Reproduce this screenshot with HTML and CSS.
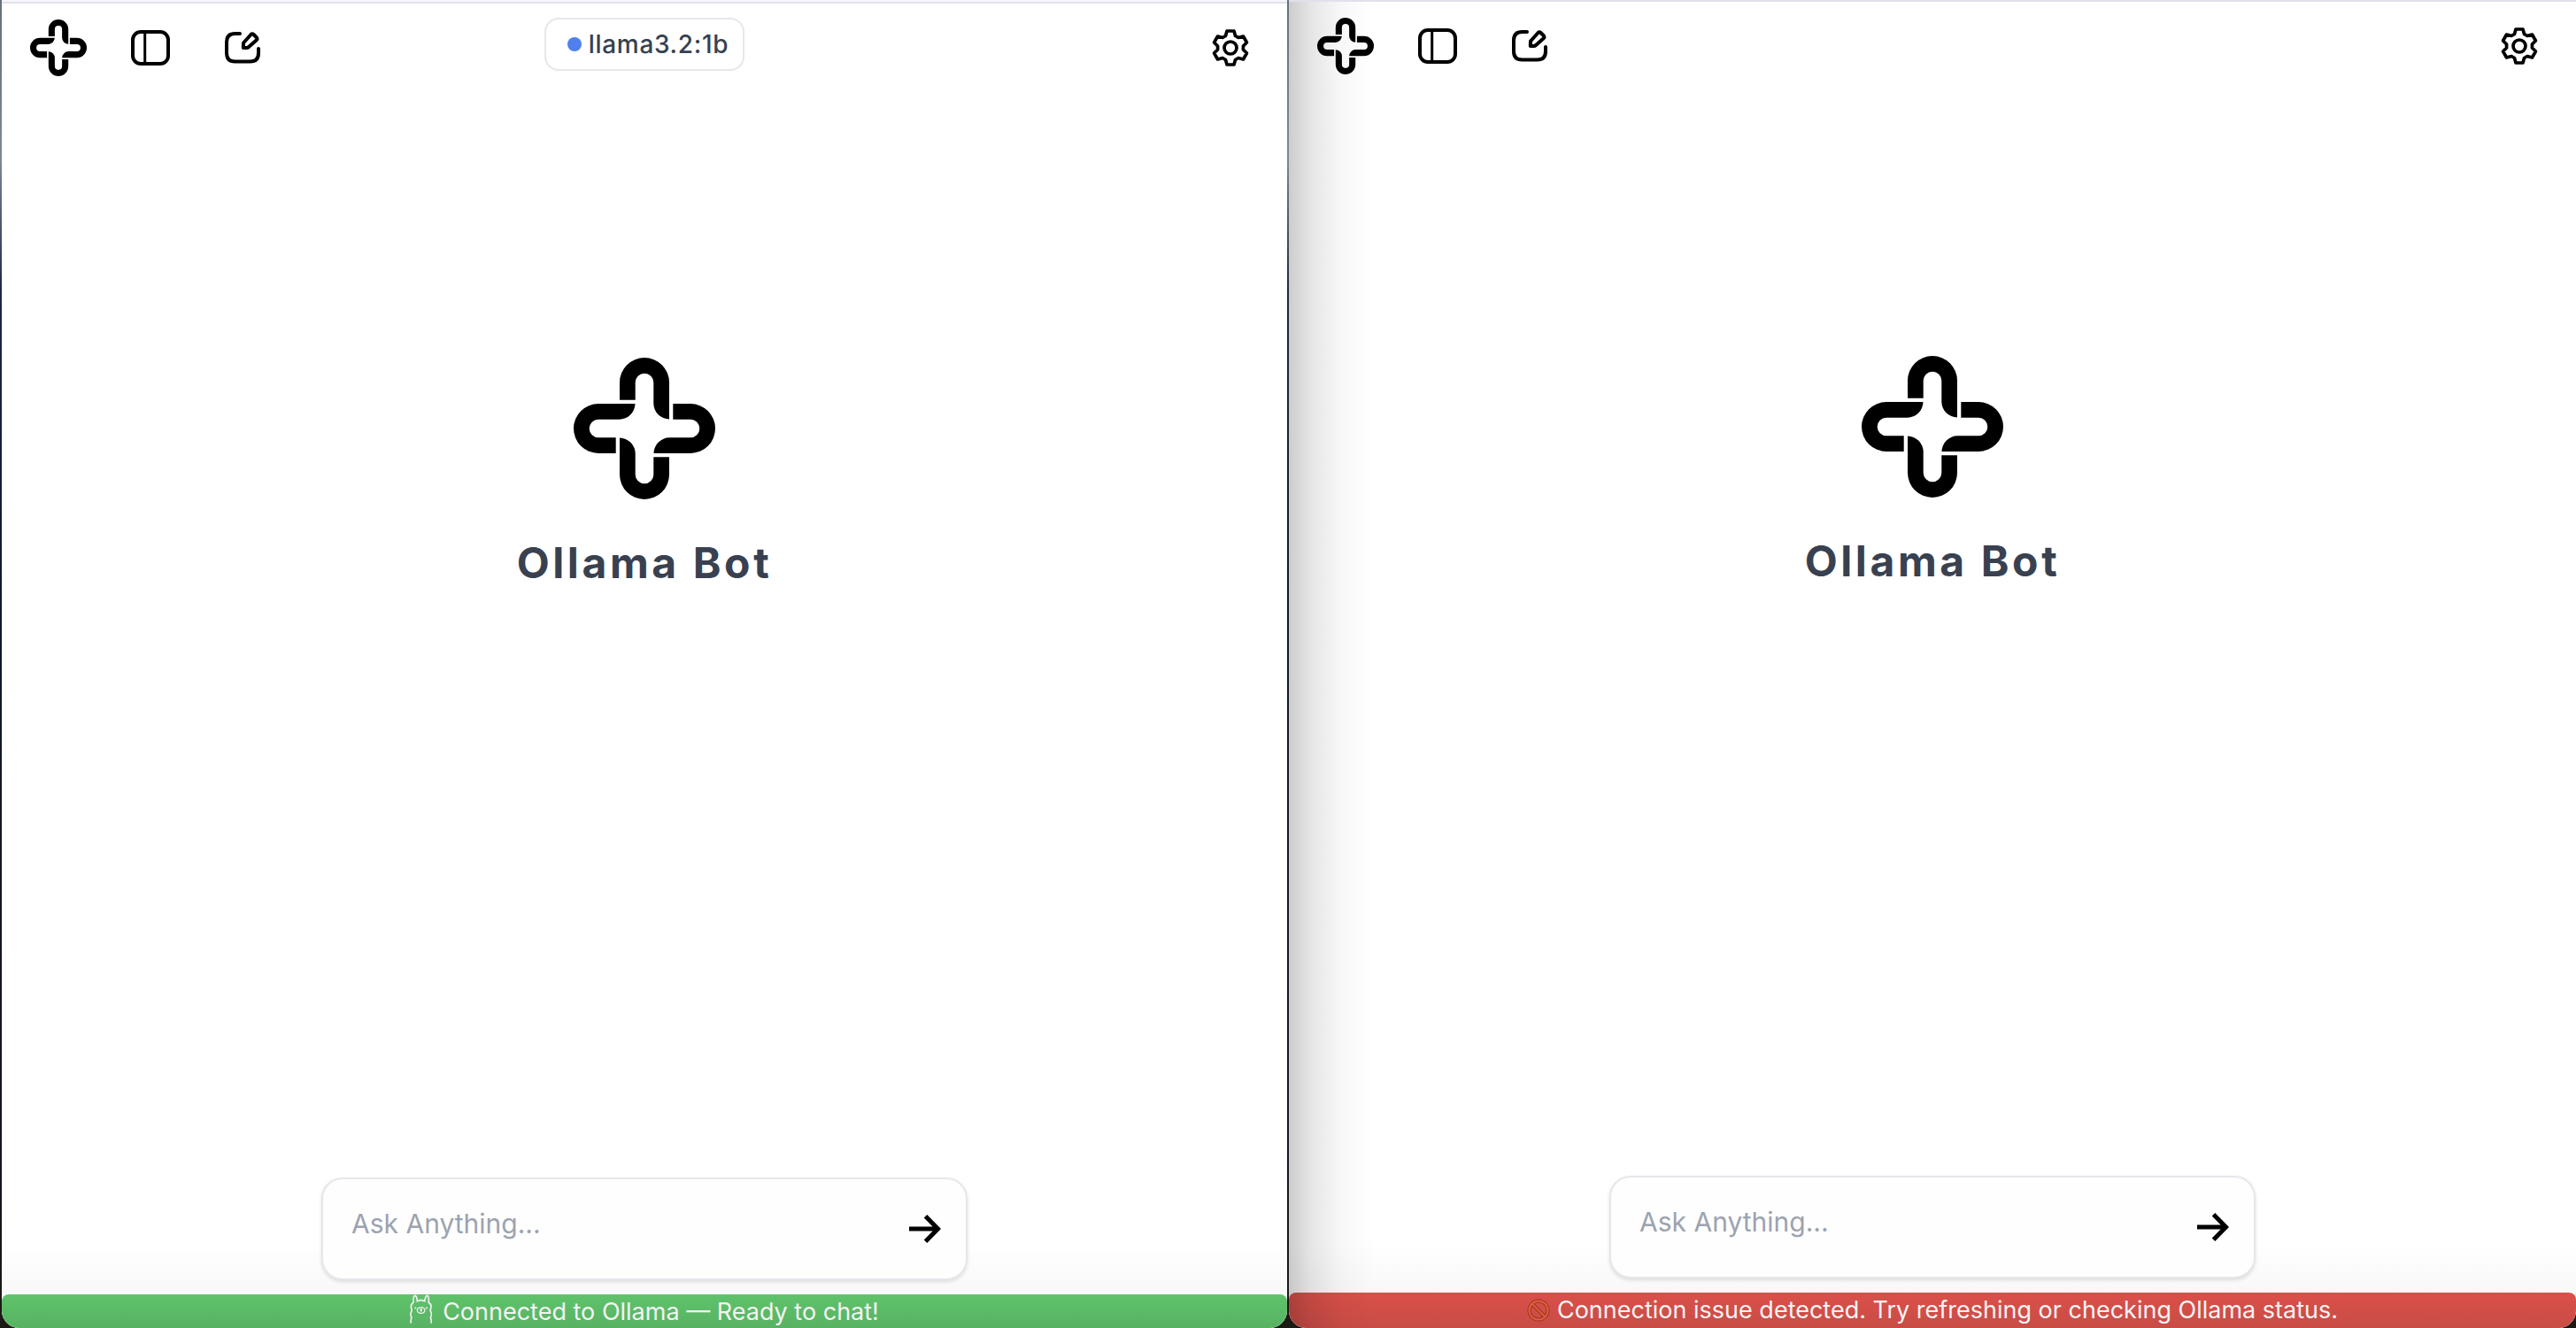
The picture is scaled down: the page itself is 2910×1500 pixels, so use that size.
FILE: index.html
```html
<!DOCTYPE html>
<html lang="en">
<head>
<meta charset="utf-8">
<meta name="viewport" content="width=device-width, initial-scale=1">
<title>Ollama Bot</title>
<link rel="stylesheet" href="styles.css">
</head>
<body>
<svg class="sprite" aria-hidden="true">
  <defs>
    <path id="arm" d="M52 47.7V28a28 28 0 0 1 56 0V69.5A18 18 0 0 1 90.3 51.7V28a10.3 10.3 0 0 0-20.6 0V47.7Z"/>
    <symbol id="logo" viewBox="0 0 160 160">
      <use href="#arm"/>
      <use href="#arm" transform="rotate(90 80 80)"/>
      <use href="#arm" transform="rotate(180 80 80)"/>
      <use href="#arm" transform="rotate(270 80 80)"/>
    </symbol>
    <symbol id="panel" viewBox="0 0 48 48">
      <rect x="4" y="6" width="40" height="36" rx="9" fill="none" stroke="#000" stroke-width="4"/>
      <path d="M17.7 6V42" stroke="#000" stroke-width="3"/>
    </symbol>
    <symbol id="compose" viewBox="0 0 48 48">
      <g fill="none" stroke="#000" stroke-width="4" stroke-linecap="round" stroke-linejoin="round">
        <path d="M21 8H15.500Q6 8 6 17.500V30Q6 39.500 15.500 39.500H32.500Q42 39.500 42 30V25"/>
        <path d="M25 18.500L33.500 9Q35 7.500 36.500 9L40 12.500Q41 14 39.800 15.200L31 23Q30 24 28.500 24H24.800Z"/>
      </g>
    </symbol>
    <symbol id="gear" viewBox="-24 -24 48 48">
      <g fill="none" stroke="#000" stroke-width="3.700" stroke-linejoin="round">
        <path d="M-4 -19H4L5.500 -13.500L8.900 -11.500L14.450 -13L18.450 -6L14.440 -2V2L18.450 6L14.450 13L8.900 11.500L5.500 13.500L4 19H-4L-5.500 13.500L-8.900 11.500L-14.450 13L-18.450 6L-14.440 2V-2L-18.450 -6L-14.450 -13L-8.900 -11.500L-5.500 -13.500Z"/>
        <circle r="7"/>
      </g>
    </symbol>
    <symbol id="arrow" viewBox="0 0 36 32">
      <path d="M0 16H32M18.500 1.800L32.500 16L18.500 30.200" fill="none" stroke="#000" stroke-width="5"/>
    </symbol>
    <symbol id="llama" viewBox="37 64 75 99">
      <g fill="none" stroke="#f1f1f1" stroke-width="5" stroke-linecap="round">
        <path d="M49 90Q48 69 54 68Q61 69 62 87Q75 81 87 87Q90 69 96 68Q102 69 101 90"/>
        <path d="M49 91Q38 99 42 112Q45 117 42 123Q37 133 43 143Q39 150 41 160M101 91Q112 99 108 112Q105 117 108 123Q113 133 107 143Q111 150 109 160"/>
        <ellipse cx="75" cy="118" rx="13" ry="10" stroke-width="4"/>
        <path d="M73 115L75 117L77 115M75 117V121M55 110H57M93 110H95"/>
      </g>
    </symbol>
    <symbol id="blocked" viewBox="0 0 26 26">
      <circle cx="13" cy="13" r="10.500" fill="none" stroke="#9c3220" stroke-width="4"/>
      <path d="M6 6L20 20" stroke="#9c3220" stroke-width="4"/>
      <circle cx="13" cy="13" r="10.500" fill="none" stroke="#e0603c" stroke-width="2"/>
      <path d="M6 6L20 20" stroke="#e0603c" stroke-width="2"/>
    </symbol>
  </defs>
</svg>

<div class="desktop">
  <section class="window window-online" aria-label="Connected">
    <div class="titlebar"></div>
    <div class="app">
      <header class="header">
        <nav class="tools">
          <svg class="logo-small" role="img" aria-label="Ollama Bot"><use href="#logo"/></svg>
          <button class="tool" type="button" aria-label="Toggle sidebar"><svg class="icon"><use href="#panel"/></svg></button>
          <button class="tool" type="button" aria-label="New chat"><svg class="icon"><use href="#compose"/></svg></button>
        </nav>
        <button class="model" type="button"><span class="dot"></span>llama3.2:1b</button>
        <button class="tool settings" type="button" aria-label="Settings"><svg class="icon"><use href="#gear"/></svg></button>
      </header>
      <main class="hero">
        <svg class="logo-large" aria-hidden="true"><use href="#logo"/></svg>
        <h1 class="title">Ollama Bot</h1>
      </main>
      <form class="composer">
        <input class="prompt" type="text" placeholder="Ask Anything..." aria-label="Ask Anything">
        <button class="send" type="button" aria-label="Send"><svg class="arrow"><use href="#arrow"/></svg></button>
      </form>
      <footer class="status status-ok"><svg class="llama" aria-hidden="true"><use href="#llama"/></svg><span>Connected to Ollama — Ready to chat!</span></footer>
    </div>
  </section>

  <section class="window window-offline" aria-label="Disconnected">
    <div class="titlebar"></div>
    <div class="app">
      <header class="header">
        <nav class="tools">
          <svg class="logo-small" role="img" aria-label="Ollama Bot"><use href="#logo"/></svg>
          <button class="tool" type="button" aria-label="Toggle sidebar"><svg class="icon"><use href="#panel"/></svg></button>
          <button class="tool" type="button" aria-label="New chat"><svg class="icon"><use href="#compose"/></svg></button>
        </nav>
        <button class="tool settings" type="button" aria-label="Settings"><svg class="icon"><use href="#gear"/></svg></button>
      </header>
      <main class="hero">
        <svg class="logo-large" aria-hidden="true"><use href="#logo"/></svg>
        <h1 class="title">Ollama Bot</h1>
      </main>
      <form class="composer">
        <input class="prompt" type="text" placeholder="Ask Anything..." aria-label="Ask Anything">
        <button class="send" type="button" aria-label="Send"><svg class="arrow"><use href="#arrow"/></svg></button>
      </form>
      <footer class="status status-error"><svg class="blocked" aria-hidden="true"><use href="#blocked"/></svg><span>Connection issue detected. Try refreshing or checking Ollama status.</span></footer>
    </div>
  </section>
</div>
</body>
</html>
```
FILE: styles.css
```css
* {
  box-sizing: border-box;
}

body {
  margin: 0;
  font-family: Inter, "Liberation Sans", sans-serif;
  color: #374151;
}

button {
  margin: 0;
  padding: 0;
  border: 0;
  background: none;
  font: inherit;
  color: inherit;
  cursor: pointer;
}

svg {
  display: block;
  flex: none;
}

.sprite {
  position: absolute;
  width: 0;
  height: 0;
}

.desktop {
  display: grid;
  grid-template-columns: calc(50% - 2px) 1fr;
  gap: 2px;
  height: 100vh;
  padding-left: 2px;
  overflow: hidden;
  background: linear-gradient(#66707e 0, #7d8795 12%, #1d2745 22%, #10182c 45%, #14161f 90%, #1c1a14 100%);
}

.window {
  position: relative;
  display: flex;
  flex-direction: column;
  min-width: 0;
  overflow: hidden;
  background: #fff;
  border-radius: 0 0 20px 20px;
}

.titlebar {
  flex: none;
  border-bottom: 2px solid #e1e0eb;
  background: #f6f6fb;
}

.window-online .titlebar {
  padding-top: 2px;
}

/* Shadow that the front window casts on the one behind it */
.window-offline::after {
  content: "";
  position: absolute;
  inset: 2px auto 0 0;
  width: 96px;
  pointer-events: none;
  background: linear-gradient(90deg, rgba(0, 0, 0, 0.2), rgba(0, 0, 0, 0.1) 25%, rgba(0, 0, 0, 0.03) 60%, transparent);
}

.app {
  display: flex;
  flex: none;
  flex-direction: column;
  height: calc(100vh - 2px);
  background: linear-gradient(transparent calc(100% - 96px), #f8f8f8 calc(100% - 40px));
}

.header {
  display: grid;
  grid-template-columns: 1fr auto 1fr;
  align-items: center;
  padding: 16px 32px;
}

.tools {
  display: flex;
  align-items: center;
  gap: 40px;
  height: 68px;
}

.logo-small {
  width: 64px;
  height: 64px;
}

.tool {
  display: grid;
  place-items: center;
  width: 64px;
  height: 64px;
}

.icon {
  width: 48px;
  height: 48px;
}

.settings {
  grid-column: 3;
  justify-self: end;
}

.model {
  display: flex;
  align-items: center;
  align-self: start;
  gap: 8px;
  height: 60px;
  padding: 0 16px 0 24px;
  border: 2px solid #e5e7eb;
  border-radius: 16px;
  font-size: 28px;
  font-weight: 500;
  letter-spacing: 0.025em;
}

.dot {
  width: 16px;
  height: 16px;
  border-radius: 50%;
  background: #4f80ee;
}

.hero {
  display: flex;
  flex: 1;
  flex-direction: column;
  align-items: center;
  gap: 44px;
  padding-top: 20vh;
}

.logo-large {
  width: 160px;
  height: 160px;
}

.title {
  margin: 0;
  font-size: 48px;
  line-height: 56px;
  font-weight: 700;
  letter-spacing: 0.075em;
  color: #394150;
}

.composer {
  display: flex;
  align-items: center;
  align-self: center;
  width: 100%;
  max-width: 730px;
  height: 116px;
  margin-bottom: 16px;
  padding: 0 28px 0 32px;
  border: 2px solid #e5e7eb;
  border-radius: 24px;
  background: #fefefe;
  box-shadow: 0 2px 4px rgba(0, 0, 0, 0.12);
}

.prompt {
  flex: 1;
  min-width: 0;
  padding: 0 0 12px;
  border: 0;
  outline: 0;
  background: none;
  font: inherit;
  font-size: 30px;
  color: inherit;
}

.prompt::placeholder {
  color: #9ca3af;
  opacity: 1;
}

.arrow {
  width: 36px;
  height: 32px;
}

.status {
  display: flex;
  align-items: center;
  justify-content: center;
  height: 40px;
  border-radius: 8px 8px 0 0;
  font-size: 27px;
  line-height: 40px;
  white-space: nowrap;
  color: #f3f3f3;
}

.status-ok {
  gap: 12px;
  background: linear-gradient(#5fc36b, #57b162);
}

.status-error {
  gap: 8px;
  background: linear-gradient(#da5049, #c94c46);
}

.llama {
  align-self: start;
  width: 25px;
  height: 33px;
}

.blocked {
  width: 26px;
  height: 26px;
}
```
